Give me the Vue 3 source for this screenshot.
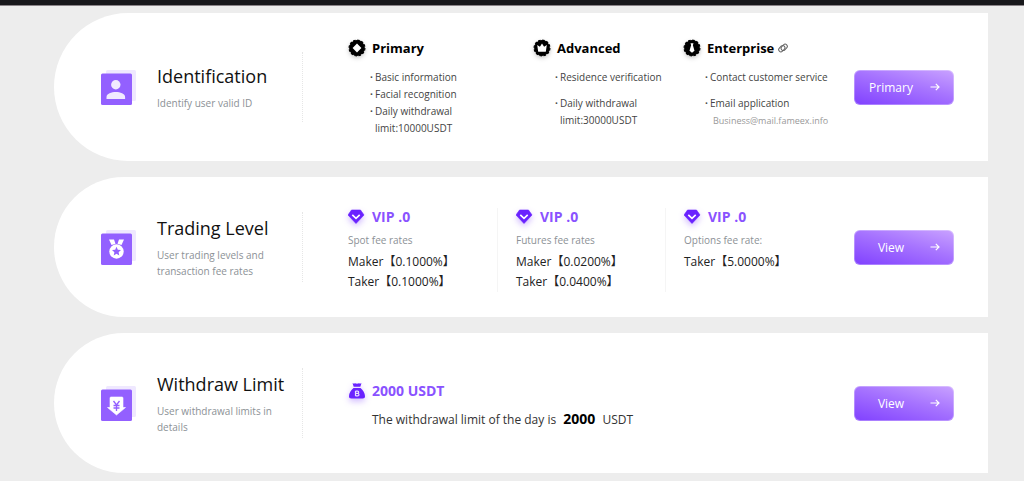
<template>
  <div class="page">
    <header class="top-bar"></header>

    <main class="cards">
      <!-- Identification -->
      <section class="card">
        <svg class="card-icon" viewBox="0 0 35 35">
          <rect x="5" y="0" width="30" height="31" rx="1.5" fill="#efe8ff" />
          <rect x="0" y="3.5" width="31" height="31.5" rx="1.5" fill="#9360ff" />
          <circle cx="14.8" cy="14.8" r="4.7" fill="#f1eaff" />
          <path d="M5.5 29v-2c0-3.300 5-5 9.300-5s9.300 1.700 9.300 5v2z" fill="#f1eaff" />
        </svg>
        <div class="card-info">
          <h2 class="card-title">Identification</h2>
          <p class="card-desc">Identify user valid ID</p>
        </div>
        <div class="card-content levels">
          <div v-for="level in levels" :key="level.name" class="level">
            <h3 class="heading">
              <svg class="heading-icon badge" viewBox="0 0 18 18">
                <circle cx="9" cy="9" r="7.900" fill="#000" />
                <circle cx="9" cy="9" r="7.900" fill="none" stroke="#000" stroke-width="1.200" stroke-dasharray="2.500 1.636" />
                <path v-if="level.icon === 'star'" d="M9 4.600L11.200 6.800 13.400 9 11.200 11.200 9 13.400 6.800 11.200 4.600 9 6.800 6.800z" fill="#fff" />
                <path v-else-if="level.icon === 'crown'" d="M4.200 6l2.700 1.700L9 4.400l2.100 3.300L13.800 6l-1 6.700H5.200z" fill="#fff" />
                <path v-else d="M7.500 4.200h3L9.900 6.200l1.600 5.500L9 13.800l-2.500-2.100 1.600-5.500z" fill="#fff" />
              </svg>
              {{ level.name }}
              <svg v-if="level.link" class="link-icon" viewBox="0 0 10 10">
                <g fill="none" stroke="#666" stroke-width="1">
                  <rect x="-3.500" y="-2.200" width="7" height="4.400" rx="2.200" transform="translate(3.800 5.700) rotate(-45)" />
                  <rect x="-3.500" y="-2.200" width="7" height="4.400" rx="2.200" transform="translate(6.200 4.300) rotate(-45)" />
                </g>
              </svg>
            </h3>
            <ul class="level-list" :class="{ loose: level.items.length < 3 }">
              <li v-for="item in level.items" :key="item">{{ item }}</li>
            </ul>
            <p v-if="level.mail" class="level-mail">{{ level.mail }}</p>
          </div>
        </div>
        <button type="button" class="card-btn">
          <span class="btn-label">Primary</span>
          <svg class="btn-arrow" viewBox="0 0 10 10"><path d="M.5 5h8.500M5.800 1.800L9 5 5.800 8.200" /></svg>
        </button>
      </section>

      <!-- Trading level -->
      <section class="card">
        <svg class="card-icon" viewBox="0 0 35 35">
          <rect x="5" y="0" width="30" height="31" rx="1.5" fill="#efe8ff" />
          <rect x="0" y="3.5" width="31" height="31.5" rx="1.5" fill="#9360ff" />
          <path d="M8 9.500h5l1.500 4.200-4 1.300zM23 9.500h-5l-1.500 4.200 4 1.300z" fill="#fff" />
          <circle cx="15.500" cy="21.500" r="7.200" fill="#fff" />
          <path d="M15.500 16.800l1.300 3 3.200.300-2.400 2.100.700 3.200-2.800-1.700-2.800 1.700.700-3.200-2.400-2.100 3.200-.300z" fill="#9360ff" />
        </svg>
        <div class="card-info">
          <h2 class="card-title">Trading Level</h2>
          <p class="card-desc">User trading levels and transaction fee rates</p>
        </div>
        <div class="card-content fees">
          <div v-for="fee in fees" :key="fee.label" class="fee">
            <h3 class="heading purple">
              <svg class="heading-icon" viewBox="0 0 18 18">
                <path d="M3.500 2h9L16 7 8 15.500 0 7z" fill="#6a22ff" stroke="#6a22ff" stroke-width=".6" stroke-linejoin="round" />
                <path d="M4.300 6.800L8 10.300l3.700-3.500" fill="none" stroke="#fff" stroke-width="1.600" />
              </svg>
              VIP .0
            </h3>
            <p class="fee-label">{{ fee.label }}</p>
            <p v-for="rate in fee.rates" :key="rate" class="fee-rate">{{ rate }}</p>
          </div>
        </div>
        <button type="button" class="card-btn">
          <span class="btn-label">View</span>
          <svg class="btn-arrow" viewBox="0 0 10 10"><path d="M.5 5h8.500M5.800 1.800L9 5 5.800 8.200" /></svg>
        </button>
      </section>

      <!-- Withdraw limit -->
      <section class="card">
        <svg class="card-icon" viewBox="0 0 35 35">
          <rect x="5" y="0" width="30" height="31" rx="1.5" fill="#efe8ff" />
          <rect x="0" y="3.5" width="31" height="31.5" rx="1.5" fill="#9360ff" />
          <path d="M10 11h11q1 0 1 1v9.500h2.500L15.500 29 6.500 21.500H9V12q0-1 1-1z" fill="#fff" stroke="#fff" stroke-width=".6" stroke-linejoin="round" />
          <path d="M12.500 15l3 4 3-4M15.500 19v6M12.500 19.500h6M12.500 22h6" fill="none" stroke="#9360ff" stroke-width="1.300" />
        </svg>
        <div class="card-info">
          <h2 class="card-title">Withdraw Limit</h2>
          <p class="card-desc">User withdrawal limits in details</p>
        </div>
        <div class="card-content limit">
          <h3 class="heading purple">
            <svg class="heading-icon" viewBox="0 0 18 18">
              <path d="M4.500 1.200q1.500.800 2.500 0 2 .900 4 0 1.200.800 2.500 0l-1.200 3.600H5.700zM5.500 6h7c2.500 2 4.500 5 4.500 8.300 0 1.500-.800 2.200-2.200 2.200H3.200C1.800 16.500 1 15.800 1 14.300 1 11 3 8 5.500 6z" fill="#6a22ff" />
              <path d="M7.500 9v5M7.500 9.200h2.200q1 0 1 1.100t-1 1.100H7.500M9.700 11.500q1.300 0 1.300 1.200t-1.300 1.200H7.500" fill="none" stroke="#e9dcff" stroke-width="1.200" />
            </svg>
            2000 USDT
          </h3>
          <p class="limit-text">The withdrawal limit of the day is <strong>2000</strong> USDT</p>
        </div>
        <button type="button" class="card-btn">
          <span class="btn-label">View</span>
          <svg class="btn-arrow" viewBox="0 0 10 10"><path d="M.5 5h8.500M5.800 1.800L9 5 5.800 8.200" /></svg>
        </button>
      </section>
    </main>
  </div>
</template>

<script setup>
const levels = [
  {
    name: 'Primary',
    icon: 'star',
    items: ['Basic information', 'Facial recognition', 'Daily withdrawal\nlimit:10000USDT']
  },
  {
    name: 'Advanced',
    icon: 'crown',
    items: ['Residence verification', 'Daily withdrawal\nlimit:30000USDT']
  },
  {
    name: 'Enterprise',
    icon: 'tie',
    link: true,
    items: ['Contact customer service', 'Email application'],
    mail: 'Business@mail.fameex.info'
  }
]

const fees = [
  { label: 'Spot fee rates', rates: ['Maker【0.1000%】', 'Taker【0.1000%】'] },
  { label: 'Futures fee rates', rates: ['Maker【0.0200%】', 'Taker【0.0400%】'] },
  { label: 'Options fee rate:', rates: ['Taker【5.0000%】'] }
]
</script>

<style>
body {
  margin: 0;
  background: #ededed;
}
</style>

<style scoped>
.page {
  font-family: "Open Sans", "Noto Sans", "Noto Sans CJK SC", sans-serif;
  color: #111;
}
h2, h3, p, ul {
  margin: 0;
  padding: 0;
}
.top-bar {
  height: 5px;
  background: #18181b;
  border-bottom: 1px solid #8a8488;
}

.cards {
  display: flex;
  flex-direction: column;
  gap: 16px;
  padding: 7px 36px 8px 54px;
}
.card {
  display: flex;
  align-items: center;
  box-sizing: border-box;
  min-height: 140px;
  padding: 20px 34px 20px 47px;
  background: #fff;
  border-radius: 999px 0 0 999px;
}
.card-icon {
  flex: none;
  width: 35px;
  height: 35px;
}
.card-info {
  flex: none;
  display: flex;
  flex-direction: column;
  justify-content: center;
  gap: 6px;
  box-sizing: border-box;
  width: 146px;
  min-height: 70px;
  margin-left: 21px;
  padding-right: 24px;
  border-right: 1px dotted #e6e6e6;
}
.card-title {
  font-size: 18px;
  line-height: 26px;
  font-weight: 400;
  white-space: nowrap;
}
.card-desc {
  font-size: 10px;
  line-height: 16px;
  color: #8c9196;
}
.card-content {
  flex: 1;
  min-width: 0;
  margin: 0 2px 0 45px;
}

.heading {
  display: flex;
  align-items: center;
  font-size: 13px;
  line-height: 18px;
  font-weight: 700;
  color: #000;
}
.heading.purple {
  font-size: 14px;
  color: #8a52ff;
}
.heading-icon {
  flex: none;
  width: 18px;
  height: 18px;
  margin-right: 6px;
  filter: drop-shadow(0 3px 3px rgba(106, 34, 255, 0.3));
}
.heading-icon.badge {
  filter: drop-shadow(0 2px 2px rgba(0, 0, 0, 0.2));
}
.link-icon {
  width: 10px;
  height: 10px;
  margin-left: 4px;
  overflow: visible;
}

.levels {
  display: grid;
  grid-template-columns: 185fr 150fr 169fr;
  padding: 6px 0 4px;
}
.level-list {
  display: flex;
  flex-direction: column;
  margin-top: 12px;
  padding-left: 27px;
  list-style: none;
  font-size: 10px;
  line-height: 17px;
  color: #444;
}
.level-list.loose {
  gap: 9px;
}
.level-list li {
  position: relative;
  white-space: pre;
}
.level-list li::before {
  content: '·';
  position: absolute;
  left: -5px;
  font-weight: 700;
}
.level-mail {
  padding-left: 30px;
  font-size: 9px;
  line-height: 17px;
  color: #999;
}

.fees {
  display: grid;
  grid-template-columns: repeat(3, 1fr);
  padding-top: 6px;
}
.fee + .fee {
  position: relative;
}
.fee + .fee::before {
  content: '';
  position: absolute;
  top: 0;
  bottom: 0;
  left: -19px;
  border-left: 1px solid #f5f5f5;
}
.fee-label {
  margin: 5px 0 3px;
  font-size: 10px;
  line-height: 18px;
  color: #8c9196;
}
.fee-rate {
  font-size: 12px;
  line-height: 20px;
  color: #222;
  white-space: nowrap;
}

.limit {
  padding-top: 6px;
}
.limit-text {
  margin-top: 9px;
  padding-left: 24px;
  font-size: 12px;
  line-height: 20px;
  color: #333;
}
.limit-text strong {
  margin: 0 4px;
  font-size: 14px;
  color: #000;
}

.card-btn {
  flex: none;
  display: flex;
  align-items: center;
  box-sizing: border-box;
  width: 100px;
  height: 35px;
  padding: 0 13px 0 0;
  border: 1px solid rgba(255, 255, 255, 0.3);
  border-radius: 6px;
  background: linear-gradient(15deg, #8040ff 0%, #a673ff 55%, #c9a2ff 100%) border-box;
  color: #fff;
  font-family: inherit;
  font-size: 12px;
  cursor: pointer;
}
.card-btn:hover {
  opacity: 0.9;
}
.btn-label {
  flex: 1;
  text-align: center;
}
.btn-arrow {
  width: 10px;
  height: 10px;
  margin-left: 3px;
  fill: none;
  stroke: #fff;
  stroke-width: 1.2;
}
</style>
